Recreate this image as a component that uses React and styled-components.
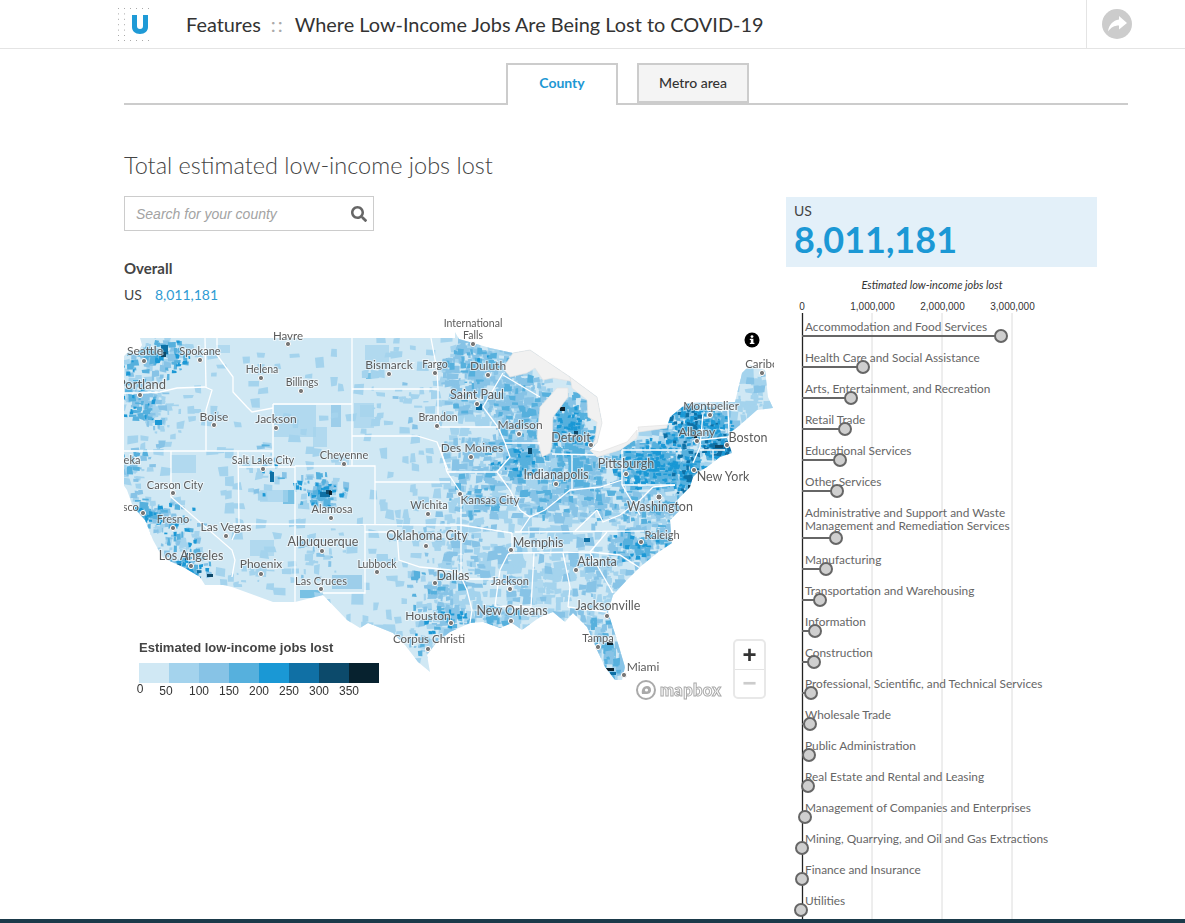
import React, { useMemo } from "react";
import styled, { createGlobalStyle } from "styled-components";
import { FaSearch } from "react-icons/fa";

const GlobalStyle = createGlobalStyle`
  html, body { margin: 0; padding: 0; background: #fff; height: 923px; overflow: hidden; }
  body { font-family: Lato, "Liberation Sans", sans-serif; color: #333; }
`;

const PALETTE = ["#d0e8f4", "#a4d3ed", "#87c3e6", "#56b0dd", "#1a98d5", "#1070a5", "#0c4a6b", "#07222f"];

const JOBS = [
  { name: ["Accommodation and Food Services"], x: 1001 },
  { name: ["Health Care and Social Assistance"], x: 863 },
  { name: ["Arts, Entertainment, and Recreation"], x: 851 },
  { name: ["Retail Trade"], x: 845 },
  { name: ["Educational Services"], x: 840 },
  { name: ["Other Services"], x: 837 },
  { name: ["Administrative and Support and Waste", "Management and Remediation Services"], x: 836 },
  { name: ["Manufacturing"], x: 826 },
  { name: ["Transportation and Warehousing"], x: 820 },
  { name: ["Information"], x: 815 },
  { name: ["Construction"], x: 814 },
  { name: ["Professional, Scientific, and Technical Services"], x: 811 },
  { name: ["Wholesale Trade"], x: 810 },
  { name: ["Public Administration"], x: 809 },
  { name: ["Real Estate and Rental and Leasing"], x: 808 },
  { name: ["Management of Companies and Enterprises"], x: 805 },
  { name: ["Mining, Quarrying, and Oil and Gas Extractions"], x: 802 },
  { name: ["Finance and Insurance"], x: 802 },
  { name: ["Utilities"], x: 801 },
];

// page coordinates, the map svg uses a matching viewBox
const LAND =
  "140,338 455,338 455,332 459,339 473,343 490,348 513,353 530,350 570,377 597,397 602,423 597,443 590,450 597,457 620,450 637,438 638,432 667,427 670,417 687,403 735,402 742,373 750,365 765,370 768,397 773,408 757,410 740,425 730,433 727,438 732,453 720,457 707,467 697,473 693,477 690,487 677,500 680,510 670,520 672,543 657,553 640,567 627,580 613,595 608,612 617,640 625,667 622,680 615,680 605,667 597,650 587,627 573,613 565,622 553,612 540,617 522,630 512,623 500,628 483,622 470,623 450,632 436,643 427,655 430,672 418,662 405,645 393,633 368,623 360,628 347,620 323,595 295,602 273,602 232,587 223,585 205,585 200,577 183,567 163,558 153,540 145,520 133,507 127,490 120,480 120,360 130,350 138,352 142,345";

const LAKES = [
  "513,353 530,350 570,377 575,382 553,378 543,380 535,368 527,373 510,377 503,368",
  "570,377 597,397 602,423 597,443 590,447 595,440 597,422 588,417 587,400 572,388",
  "540,407 557,388 568,388 568,397 553,417 552,443 550,453 542,457 537,437",
  "590,450 597,457 620,450 637,438 637,430 627,442 600,452",
  "638,427 667,425 667,428 639,432",
];

const BORDERS = [
  "205,338 206,387", "124,393 140,393 160,392 177,388 205,387", "205,387 212,390 206,410 206,451",
  "217,338 217,355 233,377 233,392 247,407 252,412 273,408", "352,338 352,404", "273,404 352,404",
  "273,404 273,467", "124,451 273,451", "171,451 171,497 232,550 235,560 232,577", "238,451 239,524 232,540",
  "239,467 295,467", "295,466 295,602", "295,466 375,466 375,524", "233,524 462,525", "352,404 352,466",
  "352,436 417,436 437,442 448,470", "375,482 450,482", "352,389 437,389", "431,338 437,370 438,389 438,430",
  "440,427 498,427", "498,427 505,443 510,457 497,472", "447,472 497,472", "440,447 447,472", "447,472 461,493",
  "503,373 483,407 498,427", "505,443 540,443", "503,375 540,397", "572,455 572,490", "622,450 622,485",
  "622,450 682,450", "622,485 675,485", "552,454 600,455", "461,493 461,579", "461,525 512,533",
  "515,532 644,531", "512,553 590,552 607,532", "590,552 620,555 640,568", "590,553 613,593",
  "563,553 570,587 568,607", "534,553 531,607", "508,554 500,570 495,606 531,607", "462,579 500,579",
  "462,579 467,590 472,610 470,623", "568,607 607,612", "365,532 397,532 399,560 420,567 450,570 462,575",
  "365,525 365,593 323,593", "497,472 510,490 520,510 530,517 545,510 570,490 600,487 622,480",
  "520,532 530,517", "622,485 640,515", "597,510 603,522 620,515 640,500 653,487 675,485", "597,510 575,531",
  "703,413 700,447 693,463", "707,410 728,410 729,433", "700,440 728,437", "700,450 725,450", "713,450 713,463",
  "512,533 512,553 508,554",
];

const BLOCKS = [
  [274, 405, 42, 32, 1], [331, 405, 10, 22, 2], [313, 427, 14, 20, 1], [354, 403, 20, 25, 1], [171, 455, 25, 18, 1],
  [283, 490, 12, 14, 3], [260, 490, 28, 12, 1], [332, 575, 30, 14, 2], [360, 405, 14, 12, 1], [250, 540, 24, 16, 1],
  [365, 345, 24, 24, 1], [366, 373, 6, 6, 3], [300, 590, 20, 8, 3], [610, 648, 6, 12, 3], [615, 663, 8, 12, 2],
  [525, 580, 18, 24, 1], [216, 345, 14, 8, 1], [335, 455, 14, 10, 1],
];

const HEAT = [
  [155, 358, 36, 24, 120, [1, 2, 3, 3, 4]], [140, 400, 24, 24, 90, [1, 2, 3, 4]], [160, 420, 26, 28, 40, [1, 1, 2]],
  [135, 470, 18, 28, 40, [1, 2, 3]], [145, 515, 20, 20, 90, [1, 2, 3, 4]], [175, 535, 30, 34, 80, [1, 2, 3, 4]],
  [190, 570, 24, 16, 70, [2, 3, 4, 5]], [320, 490, 28, 18, 90, [1, 2, 3, 4]], [263, 470, 22, 28, 24, [1, 1, 2, 4]],
  [320, 555, 30, 34, 24, [1, 1, 2]], [250, 570, 32, 20, 14, [1, 1]], [400, 400, 34, 34, 18, [1, 1, 2]],
  [480, 380, 40, 40, 220, [1, 1, 2, 2, 3]], [485, 355, 30, 14, 30, [2, 3, 4]], [525, 410, 30, 36, 170, [1, 2, 2, 3]],
  [520, 455, 34, 26, 180, [1, 2, 3, 3, 4]], [475, 455, 34, 26, 60, [1, 1, 2]], [480, 500, 32, 30, 90, [1, 2, 3]],
  [545, 420, 24, 20, 40, [1, 2, 3]], [570, 425, 26, 32, 230, [2, 3, 3, 4]], [575, 470, 30, 24, 170, [1, 2, 3, 3]],
  [550, 500, 38, 20, 130, [1, 2, 3]], [655, 465, 42, 26, 430, [2, 3, 3, 4, 4]], [690, 425, 28, 24, 260, [2, 3, 4, 4, 5]],
  [718, 425, 16, 18, 90, [2, 3, 4]], [720, 448, 18, 14, 160, [3, 4, 5]], [752, 395, 20, 22, 20, [1]], [690, 480, 18, 28, 140, [3, 4, 5]],
  [655, 510, 34, 18, 130, [1, 2, 3]], [600, 505, 34, 26, 100, [1, 2, 3]], [640, 545, 34, 18, 170, [1, 2, 3, 4]],
  [600, 575, 30, 30, 80, [1, 1, 2]], [550, 580, 44, 30, 50, [1, 1]], [480, 560, 38, 26, 40, [1, 1, 2]], [440, 590, 32, 32, 90, [1, 2, 3]],
  [450, 620, 24, 14, 50, [2, 3, 4]], [495, 618, 28, 12, 50, [1, 2, 3]], [425, 640, 16, 20, 30, [1, 2, 3, 4]], [602, 635, 18, 34, 70, [1, 2, 3]],
  [612, 660, 12, 22, 24, [2, 3]], [440, 540, 30, 26, 30, [1, 1, 2]],
];

const SPOTS = [
  [161, 345, 7, 9, 5], [161, 352, 5, 5, 6], [155, 420, 7, 5, 4], [320, 492, 10, 5, 5], [326, 490, 5, 4, 6], [329, 491, 3, 4, 7],
  [270, 472, 4, 10, 5], [560, 407, 5, 4, 7], [574, 431, 4, 4, 6], [727, 454, 5, 5, 7], [715, 445, 8, 3, 6], [694, 435, 3, 3, 7], [688, 485, 6, 5, 6],
  [607, 642, 6, 3, 7], [606, 668, 8, 3, 7], [610, 672, 6, 3, 5], [185, 553, 3, 7, 6], [207, 574, 6, 3, 6], [170, 570, 5, 4, 4], [476, 404, 6, 6, 5],
  [528, 448, 4, 6, 6], [584, 538, 6, 4, 5], [616, 415, 3, 3, 5],
];

const CITIES = [
  ["Havre", 288, 340, 288, 344, 11.5], ["Falls", 473, 339, 473, 344], ["Seattle", 145, 355, 144, 361, 12], ["Spokane", 200, 355, 200, 360, 11],
  ["Portland", 142, 389, 140, 395, 13], ["Helena", 262, 373, 261, 378], ["Billings", 302, 386, 301, 391], ["Bismarck", 389, 369, 389, 374, 12],
  ["Fargo", 435, 368, 435, 373], ["Duluth", 488, 370, 488, 375, 12], ["Saint Paul", 477, 399, 477, 404, 12.5], ["Boise", 214, 421, 214, 425, 12],
  ["Jackson", 276, 423, 276, 428, 12], ["Brandon", 438, 421, 437, 426], ["Madison", 520, 429, 519, 434, 12], ["Des Moines", 472, 452, 471, 457, 12],
  ["Detroit", 571, 442, 591, 445, 12.5], ["Montpelier", 711, 410, 710, 415, 11.5], ["Albany", 697, 436, 697, 441, 12], ["Boston", 748, 442, 727, 445, 12.5],
  ["Caribou", 765, 368, 762, 373, 11.5], ["Pittsburgh", 626, 468, 626, 474, 12.5], ["Indianapolis", 556, 479, 556, 484, 12.5], ["New York", 723, 481, 694, 470, 12.5],
  ["Salt Lake City", 263, 464, 263, 469], ["Cheyenne", 344, 459, 344, 464, 11], ["Carson City", 175, 489, 173, 493, 11], ["Eureka", 124, 464, 0, 0, 11],
  ["San Francisco", 106, 511, 143, 513, 11], ["Fresno", 173, 523, 173, 528, 11], ["Las Vegas", 226, 531, 226, 536, 12], ["Los Angeles", 191, 560, 191, 566, 12.5],
  ["Phoenix", 261, 568, 261, 574, 12], ["Alamosa", 332, 513, 331, 518, 11], ["Albuquerque", 323, 546, 322, 551, 12.5], ["Las Cruces", 321, 585, 321, 589, 11],
  ["Lubbock", 377, 568, 377, 572, 10.5], ["Wichita", 429, 509, 428, 514, 11], ["Oklahoma City", 427, 540, 426, 546, 12.5], ["Kansas City", 490, 504, 460, 494, 11.5],
  ["Washington", 660, 511, 659, 497, 12.5], ["Raleigh", 662, 539, 641, 542, 11], ["Memphis", 538, 547, 511, 550, 12.5], ["Atlanta", 597, 566, 576, 570, 12.5],
  ["Dallas", 453, 580, 435, 583, 12.5], ["Jackson", 510, 585, 510, 589, 11], ["Houston", 428, 620, 451, 623, 12], ["New Orleans", 512, 615, 511, 621, 12.5],
  ["Jacksonville", 608, 610, 607, 616, 12.5], ["Corpus Christi", 429, 643, 428, 649, 11.5], ["Tampa", 598, 642, 598, 647, 11], ["Miami", 643, 671, 624, 675, 12],
];

const LEGEND_TICKS = [
  { label: "0", shift: 1, up: 2 }, { label: "50", shift: -3 }, { label: "100" }, { label: "150" },
  { label: "200" }, { label: "250" }, { label: "300" }, { label: "350" },
];

function seeded(seed) {
  let a = seed;
  return () => {
    a = (a + 0x6d2b79f5) | 0;
    let t = Math.imul(a ^ (a >>> 15), 1 | a);
    t = (t + Math.imul(t ^ (t >>> 7), 61 | t)) ^ t;
    return ((t ^ (t >>> 14)) >>> 0) / 4294967296;
  };
}

// a county-ish quad, not quite square
function county(rnd, x, y, w, h) {
  const j = () => (rnd() - 0.5) * Math.min(w, h) * 0.7;
  return [
    [x - w + j(), y - h + j()],
    [x + w + j(), y - h + j()],
    [x + w + j(), y + h + j()],
    [x - w + j(), y + h + j()],
  ]
    .map(([px, py]) => `${px.toFixed(1)},${py.toFixed(1)}`)
    .join(" ");
}

function buildHeat() {
  const rnd = seeded(4217);
  const patches = [];
  // mottled county layer over the whole map, busier toward the east
  for (let y = 338; y < 680; y += 7) {
    for (let x = 124; x < 775; x += 8) {
      const chance = x < 360 ? 0.1 : x < 440 ? 0.2 : 0.55;
      if (rnd() > chance) continue;
      const level = x > 440 && rnd() < 0.25 ? 2 : 1;
      patches.push({ level, points: county(rnd, x + rnd() * 4, y + rnd() * 4, 2.5 + rnd() * 3.5, 2 + rnd() * 3) });
    }
  }
  HEAT.forEach(([cx, cy, rx, ry, count, levels]) => {
    for (let i = 0; i < count; i++) {
      const angle = rnd() * Math.PI * 2;
      const dist = Math.pow(rnd(), 0.8);
      const x = cx + Math.cos(angle) * dist * rx;
      const y = cy + Math.sin(angle) * dist * ry;
      let level = levels[Math.floor(rnd() * levels.length)];
      if (level >= 3 && rnd() < 0.3) level -= 1;
      const big = level > 3 ? 1.8 : 3.4;
      patches.push({ level, points: county(rnd, x, y, 0.8 + rnd() * big, 0.8 + rnd() * big * 0.8) });
    }
  });
  return patches.sort((a, b) => a.level - b.level);
}

const Page = styled.div`
  width: 1185px;
  height: 923px;
  position: relative;
  overflow: hidden;
`;

const Header = styled.header`
  height: 48px;
  border-bottom: 1px solid #e4e4e4;
  display: flex;
  align-items: center;
  padding-left: 117px;
`;

const Title = styled.div`
  margin-left: 37px;
  font-size: 19.9px;
  color: #333;
  white-space: nowrap;
  flex: 1;
  padding-bottom: 1px;
`;

const Sep = styled.span`
  color: #aaa;
  margin: 0 10px;
  letter-spacing: 2px;
`;

const ShareSlot = styled.div`
  width: 99px;
  height: 48px;
  border-left: 1px solid #e4e4e4;
  display: flex;
  align-items: center;
  padding-left: 15px;
  box-sizing: border-box;
`;

const Main = styled.main`
  padding: 14px 57px 0 124px;
`;

const Tabs = styled.div`
  display: flex;
  justify-content: center;
  gap: 19px;
  height: 40px;
  padding-left: 3px;
  border-bottom: 2px solid #ccc;
`;

const Tab = styled.div`
  width: 112px;
  height: ${(p) => (p.$active ? "42px" : "40px")};
  box-sizing: border-box;
  border: 2px solid #ccc;
  border-bottom: ${(p) => (p.$active ? "none" : "2px solid #ccc")};
  background: ${(p) => (p.$active ? "#fff" : "#f4f4f4")};
  color: ${(p) => (p.$active ? "#1d98d4" : "#333")};
  font-size: 14px;
  font-weight: ${(p) => (p.$active ? 700 : 500)};
  display: flex;
  align-items: center;
  justify-content: center;
  padding-bottom: ${(p) => (p.$active ? "5px" : "2px")};
`;

const Columns = styled.div`
  display: grid;
  grid-template-columns: 662px 311px;
  margin-top: 46px;
`;

const Heading = styled.h2`
  margin: 0;
  font-size: 23.5px;
  line-height: 29px;
  font-weight: 300;
  color: #444;
  white-space: nowrap;
`;

const SearchBox = styled.div`
  width: 250px;
  height: 35px;
  box-sizing: border-box;
  margin-top: 16px;
  border: 1px solid #ccc;
  display: flex;
  align-items: center;
  justify-content: space-between;
  padding: 0 6px 0 11px;
  color: #666;
`;

const Placeholder = styled.span`
  font-family: "Liberation Sans", Arial, sans-serif;
  font-style: italic;
  font-size: 14px;
  color: #a3a3a3;
`;

const Overall = styled.h3`
  margin: 28px 0 0;
  font-size: 15px;
  line-height: 18px;
  font-weight: 700;
  color: #444;
`;

const OverallRow = styled.div`
  margin-top: 9px;
  font-size: 14px;
  line-height: 17px;
  color: #444;
  display: flex;
  gap: 13px;
`;

const Figure = styled.span`
  color: #2f9bd3;
`;

const MapWrap = styled.div`
  position: relative;
  margin-top: 12px;
  width: 650px;
  height: 385px;
`;

const MapSvg = styled.svg`
  display: block;
  overflow: hidden;
`;

const CityLabel = styled.text`
  font-family: Lato, sans-serif;
  fill: #5c5c5c;
  stroke: rgba(255, 255, 255, 0.55);
  stroke-width: 2px;
  paint-order: stroke;
  text-anchor: middle;
`;

const CityDot = styled.circle`
  fill: #777;
  stroke: #fff;
  stroke-width: 1px;
`;

const Legend = styled.div`
  position: absolute;
  left: 15px;
  top: 325px;
  width: 240px;
`;

const LegendTitle = styled.div`
  font-family: "Liberation Sans", Arial, sans-serif;
  font-weight: 700;
  font-size: 13px;
  line-height: 16px;
  color: #444;
`;

const LegendBar = styled.div`
  display: flex;
  height: 20px;
  margin-top: 7px;
`;

const Swatch = styled.div`
  flex: 1;
  background: ${(p) => p.$color};
`;

const LegendTicks = styled.div`
  display: flex;
  margin: 1px 0 0 -15px;
`;

const LegendTick = styled.span`
  width: 30px;
  text-align: center;
  font-family: "Liberation Sans", Arial, sans-serif;
  font-size: 12px;
  line-height: 14px;
  color: #333;
  transform: translate(${(p) => p.$shift || 0}px, ${(p) => -(p.$up || 0)}px);
`;

const ZoomControl = styled.div`
  position: absolute;
  left: 609px;
  top: 324px;
  width: 33px;
  height: 60px;
  box-sizing: border-box;
  border: 2px solid #e8e8e8;
  border-radius: 5px;
  background: #fff;
  display: flex;
  flex-direction: column;
`;

const ZoomButton = styled.div`
  flex: 1;
  display: flex;
  align-items: center;
  justify-content: center;
  font-family: "Liberation Sans", Arial, sans-serif;
  font-size: 24px;
  font-weight: 700;
  line-height: 1;
  color: ${(p) => (p.$muted ? "#ccc" : "#333")};
  & + & {
    border-top: 1px solid #e4e4e4;
  }
`;

const InfoIcon = styled.svg`
  position: absolute;
  left: 620px;
  top: 17px;
`;

const Attribution = styled.div`
  position: absolute;
  left: 511px;
  top: 364px;
  display: flex;
  align-items: center;
  gap: 3px;
`;

const MapboxWord = styled.span`
  font-size: 16.5px;
  font-weight: 900;
  letter-spacing: 0.4px;
  color: #fff;
  -webkit-text-stroke: 1px #aaa;
`;

const Panel = styled.aside`
  display: flex;
  flex-direction: column;
  margin-top: 46px;
`;

const TotalCard = styled.div`
  height: 70px;
  box-sizing: border-box;
  padding: 5px 8px;
  background: #e3f0f9;
`;

const TotalLabel = styled.div`
  font-size: 14px;
  line-height: 17px;
  color: #444;
`;

const TotalValue = styled.div`
  font-size: 36px;
  line-height: 40px;
  font-weight: 700;
  color: #1b98d5;
`;

const ChartTitle = styled.text`
  font-family: Lato, sans-serif;
  font-style: italic;
  font-size: 11px;
  fill: #333;
  text-anchor: middle;
`;

const AxisLabel = styled.text`
  font-family: "Liberation Sans", Arial, sans-serif;
  font-size: 10px;
  fill: #333;
  text-anchor: middle;
`;

const RowLabel = styled.text`
  font-family: Lato, sans-serif;
  font-size: 11.85px;
  fill: #666;
`;

const BottomBar = styled.div`
  position: fixed;
  left: 0;
  right: 0;
  bottom: 0;
  height: 4px;
  background: #1b3a4a;
`;

const UsMap = () => {
  const patches = useMemo(buildHeat, []);
  return (
    <MapSvg width="650" height="385" viewBox="124 315 650 385">
      <defs>
        <clipPath id="land">
          <polygon points={LAND} />
        </clipPath>
        <filter id="soft">
          <feGaussianBlur stdDeviation="0.45" />
        </filter>
      </defs>
      <polygon points={LAND} fill={PALETTE[0]} />
      <g clipPath="url(#land)">
        <g filter="url(#soft)">
          {BLOCKS.map(([x, y, w, h, level], i) => (
            <rect key={i} x={x} y={y} width={w} height={h} fill={PALETTE[level]} opacity="0.7" />
          ))}
          {patches.map((p, i) => (
            <polygon key={i} points={p.points} fill={PALETTE[p.level]} />
          ))}
          {SPOTS.map(([x, y, w, h, level], i) => (
            <rect key={i} x={x} y={y} width={w} height={h} fill={PALETTE[level]} />
          ))}
        </g>
      </g>
      {LAKES.map((points, i) => (
        <polygon key={i} points={points} fill="#f1f1f1" stroke="#e2e2e2" strokeWidth="0.7" />
      ))}
      <g clipPath="url(#land)" fill="none" stroke="#fff" strokeWidth="1.3">
        {BORDERS.map((points, i) => (
          <polyline key={i} points={points} />
        ))}
      </g>
      <CityLabel x="473" y="327" fontSize="10.5">International</CityLabel>
      {CITIES.map(([name, x, y, dx, dy, size]) => (
        <g key={name + x}>
          {dx > 0 && <CityDot cx={dx} cy={dy} r={name === "Washington" ? 3 : 2.6} />}
          <CityLabel x={x} y={y} fontSize={size || 10.5}>{name}</CityLabel>
        </g>
      ))}
    </MapSvg>
  );
};

const JobsChart = () => {
  let lineY = 336;
  return (
    <svg width="311" height="656" viewBox="786 267 311 656" style={{ display: "block" }}>
      <ChartTitle x="932" y="289">Estimated low-income jobs lost</ChartTitle>
      <AxisLabel x="802" y="310">0</AxisLabel>
      <AxisLabel x="872.5" y="310">1,000,000</AxisLabel>
      <AxisLabel x="942.5" y="310">2,000,000</AxisLabel>
      <AxisLabel x="1012.5" y="310">3,000,000</AxisLabel>
      {[872, 942, 1012].map((x) => (
        <line key={x} x1={x} x2={x} y1="313" y2="920" stroke="#dcdcdc" strokeWidth="1" />
      ))}
      <line x1="802.5" x2="802.5" y1="313" y2="920" stroke="#222" strokeWidth="1.3" />
      {JOBS.map((job, i) => {
        const double = job.name.length > 1;
        if (i > 0) lineY += double ? 47 : 31;
        const first = double ? lineY - 21 : lineY - 5;
        return (
          <g key={job.name[0]}>
            {job.name.map((text, k) => (
              <RowLabel key={text} x="805" y={first + k * 13}>{text}</RowLabel>
            ))}
            <line x1="802" x2={job.x} y1={lineY} y2={lineY} stroke="#666" strokeWidth="2" />
            <circle cx={job.x} cy={lineY} r="6" fill="#cfcfcf" stroke="#666" strokeWidth="2" />
          </g>
        );
      })}
    </svg>
  );
};

const Logo = () => {
  const dots = [];
  for (let i = 0; i < 6; i++) {
    dots.push([1 + i * 6, 1], [1 + i * 6, 33]);
  }
  for (let i = 1; i < 6; i++) {
    dots.push([1, 1 + i * 5.4], [7, 1 + i * 5.4]);
  }
  return (
    <svg width="32" height="35" viewBox="0 0 32 35">
      {dots.map(([x, y], i) => (
        <rect key={i} x={x} y={y} width="1" height="1" fill="#aaa" />
      ))}
      <path d="M15 8h5v11c0 2 1 3 3 3s3-1 3-3V8h5v12c0 4-3 7-8 7s-8-3-8-7z" fill="#1f9ad6" />
    </svg>
  );
};

const App = () => (
  <Page>
    <GlobalStyle />
    <Header>
      <Logo />
      <Title>
        Features<Sep>::</Sep>Where Low-Income Jobs Are Being Lost to COVID-19
      </Title>
      <ShareSlot>
        <svg width="30" height="30" viewBox="0 0 30 30">
          <circle cx="15" cy="15" r="15" fill="#ccc" />
          <path d="M17 7l8 7-8 6.5V16.5c-5 0-8 2-11 6 1-7 5-11 11-12z" fill="#fff" />
        </svg>
      </ShareSlot>
    </Header>
    <Main>
      <Tabs>
        <Tab $active>County</Tab>
        <Tab>Metro area</Tab>
      </Tabs>
      <Columns>
        <section>
          <Heading>Total estimated low-income jobs lost</Heading>
          <SearchBox>
            <Placeholder>Search for your county</Placeholder>
            <FaSearch size={16} />
          </SearchBox>
          <Overall>Overall</Overall>
          <OverallRow>
            US <Figure>8,011,181</Figure>
          </OverallRow>
          <MapWrap>
            <UsMap />
            <InfoIcon width="16" height="16" viewBox="0 0 16 16">
              <circle cx="8" cy="8" r="7.5" fill="#000" />
              <rect x="6.8" y="6.8" width="2.6" height="5" fill="#fff" />
              <rect x="5.8" y="6.8" width="2" height="1.2" fill="#fff" />
              <rect x="5.8" y="10.8" width="4.6" height="1.2" fill="#fff" />
              <circle cx="8" cy="4.6" r="1.4" fill="#fff" />
            </InfoIcon>
            <Legend>
              <LegendTitle>Estimated low-income jobs lost</LegendTitle>
              <LegendBar>
                {PALETTE.map((color) => (
                  <Swatch key={color} $color={color} />
                ))}
              </LegendBar>
              <LegendTicks>
                {LEGEND_TICKS.map((tick) => (
                  <LegendTick key={tick.label} $shift={tick.shift} $up={tick.up}>{tick.label}</LegendTick>
                ))}
              </LegendTicks>
            </Legend>
            <Attribution>
              <svg width="22" height="22" viewBox="0 0 22 22">
                <circle cx="11" cy="11" r="9" fill="#fff" stroke="#aaa" strokeWidth="2" />
                <path d="M7 15c-1-4 1-8 5-8 3 0 4 2 4 4 0 3-2 4-5 4z" fill="#aaa" />
                <circle cx="11.5" cy="11" r="1.6" fill="#fff" />
              </svg>
              <MapboxWord>mapbox</MapboxWord>
            </Attribution>
            <ZoomControl>
              <ZoomButton>+</ZoomButton>
              <ZoomButton $muted>−</ZoomButton>
            </ZoomControl>
          </MapWrap>
        </section>
        <Panel>
          <TotalCard>
            <TotalLabel>US</TotalLabel>
            <TotalValue>8,011,181</TotalValue>
          </TotalCard>
          <JobsChart />
        </Panel>
      </Columns>
    </Main>
    <BottomBar />
  </Page>
);

export default App;
